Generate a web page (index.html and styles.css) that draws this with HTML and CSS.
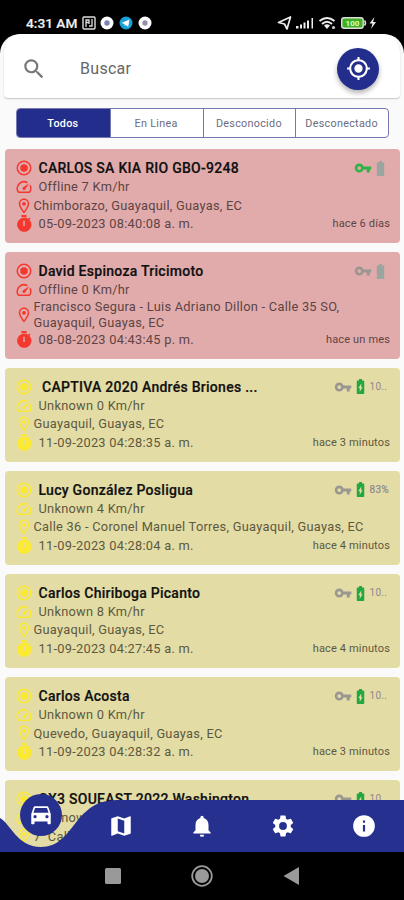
FILE: index.html
```
<!DOCTYPE html>
<html lang="es">
<head>
<meta charset="utf-8">
<title>Vehículos</title>
<link rel="stylesheet" href="styles.css">
</head>
<body>
<svg class="defs" aria-hidden="true">
  <symbol id="radio" viewBox="0 0 24 24"><path d="M12 7a5 5 0 1 0 0 10 5 5 0 0 0 0-10zm0-5a10 10 0 1 0 0 20 10 10 0 0 0 0-20zm0 18a8 8 0 1 1 0-16 8 8 0 0 1 0 16z"/></symbol>
  <symbol id="speed" viewBox="0 0 24 24"><path d="m20.38 8.57-1.23 1.85a8 8 0 0 1-.22 7.58H5.07A8 8 0 0 1 15.58 6.85l1.85-1.23A10 10 0 0 0 3.35 19a2 2 0 0 0 1.72 1h13.85a2 2 0 0 0 1.74-1 10 10 0 0 0-.27-10.44zm-9.79 6.84a2 2 0 0 0 2.83 0l5.66-8.49-8.49 5.66a2 2 0 0 0 0 2.83z"/></symbol>
  <symbol id="pin" viewBox="0 0 24 24"><path d="M12 2C8.130 2 5 5.130 5 9c0 5.250 7 13 7 13s7-7.750 7-13c0-3.870-3.130-7-7-7zM7 9a5 5 0 0 1 10 0c0 2.880-2.880 7.190-5 9.880C9.920 16.210 7 11.850 7 9z"/><circle cx="12" cy="9" r="2.500"/></symbol>
  <symbol id="timer" viewBox="0 0 24 24"><path fill-rule="evenodd" d="M8.500 0h7v2.500h-7zM19.200 6.300l1.500-1.500-1.600-1.500-1.600 1.600A9.500 9.500 0 1 0 19.200 6.300zM11 7.500h2v7h-2z"/></symbol>
  <symbol id="key" viewBox="0 0 24 24"><path d="M12.650 10C11.830 7.670 9.610 6 7 6c-3.310 0-6 2.690-6 6s2.690 6 6 6c2.610 0 4.830-1.670 5.650-4H17v4h4v-4h2v-4H12.650zM7 14.500a2.500 2.500 0 1 1 0-5 2.500 2.500 0 0 1 0 5z"/></symbol>
  <symbol id="battery" viewBox="6 1 12 22"><path d="M15.670 4H14V2h-4v2H8.330C7.600 4 7 4.600 7 5.330v15.330C7 21.400 7.600 22 8.330 22h7.330c.74 0 1.340-.6 1.340-1.330V5.330C17 4.600 16.400 4 15.670 4z"/></symbol>
  <symbol id="charging" viewBox="6 1 12 22"><path fill-rule="evenodd" d="M15.670 4H14V2h-4v2H8.330C7.600 4 7 4.600 7 5.330v15.330C7 21.400 7.600 22 8.330 22h7.330c.74 0 1.340-.6 1.340-1.330V5.330C17 4.600 16.400 4 15.670 4zM11 19v-5H9.300L13 8v5h1.700z"/></symbol>
</svg>
<div class="phone">
  <div class="status">
    <span class="clock">4:31 AM</span>
    <svg class="s-nfc" viewBox="0 0 14 14"><rect x="1" y="1" width="12" height="12" rx="1" fill="none" stroke="#ddd" stroke-width="1.400"/><path d="M4 11V4h3v4M10 3v7H7M3.500 6.500h4" fill="none" stroke="#ddd" stroke-width="1.300"/></svg>
    <svg class="s-dot" viewBox="0 0 14 14"><circle cx="7" cy="7" r="6.500" fill="#fff"/><circle cx="7" cy="7" r="2.700" fill="#7883b4"/></svg>
    <svg class="s-dot" viewBox="0 0 14 14"><circle cx="7" cy="7" r="6.500" fill="#18a0d8"/><path d="m2.500 7 8-3.500-1.300 7.500-2.400-2-1.200 1v-2z" fill="#fff"/></svg>
    <svg class="s-dot" viewBox="0 0 14 14"><circle cx="7" cy="7" r="6.500" fill="#fff"/><circle cx="7" cy="7" r="2.700" fill="#8e91a8"/></svg>
    <svg class="s-right" viewBox="0 0 101 16"><g fill="#eee"><path d="m1.500 7.500 12-5.500-3.500 12-2.500-5z" fill="none" stroke="#eee" stroke-width="1.700" stroke-linejoin="round"/><path d="M19 11h2.500v2.500H19zM23 9.500h2v4h-2zM26.500 7.500h2v6h-2zM30 5.500h2v8h-2zM34.500 3H36v10.500h-1.500z"/></g><g fill="none" stroke="#eee" stroke-width="2"><path d="M42.500 6q7.500-6 15 0M45 9q5-4.500 10 0"/></g><path d="m50 14-3-3.500q3-2.500 6 0z" fill="#eee"/><circle cx="56.500" cy="12.500" r="1.600" fill="#ccc"/><rect x="64.700" y="2.700" width="21.500" height="10.600" rx="2.500" fill="#3fae21" stroke="#ddd" stroke-width="1.400"/><path d="M87.500 5.500q2 2.500 0 5" stroke="#ddd" stroke-width="1.500" fill="none"/><text x="75.500" y="11" text-anchor="middle" class="pct">100</text><path d="m97.500 2-5 6.500h3l-1.500 5.500 5-7h-3z" fill="#eee"/></svg>
  </div>
  <div class="screen">
    <header class="search">
      <svg class="lens" viewBox="0 0 24 24"><path d="M15.500 14h-.79l-.28-.27A6.470 6.470 0 0 0 16 9.500 6.500 6.500 0 1 0 9.500 16c1.610 0 3.090-.59 4.230-1.570l.27.28v.79l5 4.990L20.490 19zm-6 0a4.500 4.500 0 1 1 0-9 4.500 4.500 0 0 1 0 9z"/></svg>
      <span class="hint">Buscar</span>
      <span class="locate"><svg viewBox="0 0 24 24"><path d="M12 8a4 4 0 1 0 0 8 4 4 0 0 0 0-8zm8.940 3A8.990 8.990 0 0 0 13 3.060V1h-2v2.060A8.990 8.990 0 0 0 3.060 11H1v2h2.060A8.990 8.990 0 0 0 11 20.940V23h2v-2.060A8.990 8.990 0 0 0 20.940 13H23v-2h-2.060zM12 19a7 7 0 1 1 0-14 7 7 0 0 1 0 14z"/></svg></span>
    </header>
    <nav class="tabs"><span class="on">Todos</span><span>En Linea</span><span>Desconocido</span><span>Desconectado</span></nav>
    <main class="list">
      <article class="card off">
        <div class="row"><svg><use href="#radio"/></svg><b>CARLOS SA KIA RIO GBO-9248</b><span class="state"><svg class="key live"><use href="#key"/></svg><svg class="bat"><use href="#battery"/></svg></span></div>
        <div class="row"><svg><use href="#speed"/></svg><span>Offline 7 Km/hr</span></div>
        <div class="row place"><svg><use href="#pin"/></svg><span>Chimborazo, Guayaquil, Guayas, EC</span></div>
        <div class="row"><svg><use href="#timer"/></svg><span class="date">05-09-2023 08:40:08 a. m.</span><small>hace 6 días</small></div>
      </article>
      <article class="card off">
        <div class="row"><svg><use href="#radio"/></svg><b>David Espinoza Tricimoto</b><span class="state"><svg class="key"><use href="#key"/></svg><svg class="bat"><use href="#battery"/></svg></span></div>
        <div class="row"><svg><use href="#speed"/></svg><span>Offline 0 Km/hr</span></div>
        <div class="row place"><svg><use href="#pin"/></svg><span>Francisco Segura - Luis Adriano Dillon - Calle 35 SO,<br>Guayaquil, Guayas, EC</span></div>
        <div class="row"><svg><use href="#timer"/></svg><span class="date">08-08-2023 04:43:45 p. m.</span><small>hace un mes</small></div>
      </article>
      <article class="card unk">
        <div class="row"><svg><use href="#radio"/></svg><b class="inset">CAPTIVA 2020 Andrés Briones ...</b><span class="state"><svg class="key"><use href="#key"/></svg><svg class="bat full"><use href="#charging"/></svg><i>10..</i></span></div>
        <div class="row"><svg><use href="#speed"/></svg><span>Unknown 0 Km/hr</span></div>
        <div class="row place"><svg><use href="#pin"/></svg><span>Guayaquil, Guayas, EC</span></div>
        <div class="row"><svg><use href="#timer"/></svg><span class="date">11-09-2023 04:28:35 a. m.</span><small>hace 3 minutos</small></div>
      </article>
      <article class="card unk">
        <div class="row"><svg><use href="#radio"/></svg><b>Lucy González Posligua</b><span class="state"><svg class="key"><use href="#key"/></svg><svg class="bat full"><use href="#charging"/></svg><i class="strong">83%</i></span></div>
        <div class="row"><svg><use href="#speed"/></svg><span>Unknown 4 Km/hr</span></div>
        <div class="row place"><svg><use href="#pin"/></svg><span>Calle 36 - Coronel Manuel Torres, Guayaquil, Guayas, EC</span></div>
        <div class="row"><svg><use href="#timer"/></svg><span class="date">11-09-2023 04:28:04 a. m.</span><small>hace 4 minutos</small></div>
      </article>
      <article class="card unk">
        <div class="row"><svg><use href="#radio"/></svg><b>Carlos Chiriboga Picanto</b><span class="state"><svg class="key"><use href="#key"/></svg><svg class="bat full"><use href="#charging"/></svg><i>10..</i></span></div>
        <div class="row"><svg><use href="#speed"/></svg><span>Unknown 8 Km/hr</span></div>
        <div class="row place"><svg><use href="#pin"/></svg><span>Guayaquil, Guayas, EC</span></div>
        <div class="row"><svg><use href="#timer"/></svg><span class="date">11-09-2023 04:27:45 a. m.</span><small>hace 4 minutos</small></div>
      </article>
      <article class="card unk">
        <div class="row"><svg><use href="#radio"/></svg><b>Carlos Acosta</b><span class="state"><svg class="key"><use href="#key"/></svg><svg class="bat full"><use href="#charging"/></svg><i>10..</i></span></div>
        <div class="row"><svg><use href="#speed"/></svg><span>Unknown 0 Km/hr</span></div>
        <div class="row place"><svg><use href="#pin"/></svg><span>Quevedo, Guayaquil, Guayas, EC</span></div>
        <div class="row"><svg><use href="#timer"/></svg><span class="date">11-09-2023 04:28:32 a. m.</span><small>hace 3 minutos</small></div>
      </article>
      <article class="card unk">
        <div class="row"><svg><use href="#radio"/></svg><b>CX3 SOUEAST 2022 Washington</b><span class="state"><svg class="key"><use href="#key"/></svg><svg class="bat full"><use href="#charging"/></svg><i>10..</i></span></div>
        <div class="row"><svg><use href="#speed"/></svg><span>Unknown</span></div>
        <div class="row place"><svg><use href="#pin"/></svg><span>7&nbsp; Calle</span></div>
      </article>
    </main>
  </div>
  <nav class="dock">
    <svg class="wave" viewBox="0 0 404 52" preserveAspectRatio="none"><path d="M0 18C10 23 17 47 41 47C75 47 73 0 117 0H404V52H0z"/></svg>
    <span class="item active"><svg viewBox="0 0 24 24"><path fill-rule="evenodd" d="M18.920 5.010C18.720 4.420 18.160 4 17.500 4h-11c-.66 0-1.210.42-1.420 1.010L3 11v8.500c0 .55.45 1 1 1h1c.55 0 1-.45 1-1V18h12v1.500c0 .55.45 1 1 1h1c.55 0 1-.45 1-1V11zM6.500 15a1.500 1.500 0 1 1 0-3 1.500 1.500 0 0 1 0 3zm11 0a1.500 1.500 0 1 1 0-3 1.500 1.500 0 0 1 0 3zM5 10l1.500-4.500h11L19 10z"/></svg></span>
    <span class="item"><svg viewBox="0 0 24 24"><path fill-rule="evenodd" d="m20.500 3-.16.03L15 5.100 9 3 3.360 4.900c-.21.07-.36.25-.36.48V20.500c0 .28.22.5.5.5l.16-.03L9 18.900l6 2.100 5.640-1.900c.21-.07.36-.25.36-.48V3.500c0-.28-.22-.5-.5-.5zM15 19l-6-2.110V5l6 2.110z"/></svg></span>
    <span class="item"><svg viewBox="0 0 24 24"><path d="M12 22a2 2 0 0 0 2-2h-4a2 2 0 0 0 2 2zm6-6v-5c0-3.070-1.640-5.640-4.500-6.320V4a1.500 1.500 0 0 0-3 0v.68C7.630 5.360 6 7.920 6 11v5l-2 2v1h16v-1z"/></svg></span>
    <span class="item"><svg viewBox="0 0 24 24"><path d="M19.140 12.940c.04-.3.06-.61.06-.94 0-.32-.02-.64-.07-.94l2.030-1.580a.49.49 0 0 0 .12-.61l-1.920-3.320a.488.488 0 0 0-.59-.22l-2.390.96c-.5-.38-1.030-.7-1.620-.94l-.36-2.540a.484.484 0 0 0-.48-.41h-3.840c-.24 0-.43.17-.47.41l-.36 2.540c-.59.24-1.130.57-1.620.94l-2.390-.96c-.22-.08-.47 0-.59.22L2.740 8.870c-.12.21-.08.47.12.61l2.030 1.580c-.05.3-.09.63-.09.94s.02.64.07.94l-2.030 1.580a.49.49 0 0 0-.12.61l1.920 3.320c.12.22.37.29.59.22l2.390-.96c.5.38 1.030.7 1.620.94l.36 2.540c.05.24.24.41.48.41h3.840c.24 0 .44-.17.47-.41l.36-2.540c.59-.24 1.130-.56 1.620-.94l2.390.96c.22.08.47 0 .59-.22l1.920-3.320c.12-.22.07-.47-.12-.61zM12 15.600a3.600 3.600 0 1 1 0-7.200 3.600 3.600 0 0 1 0 7.200z"/></svg></span>
    <span class="item"><svg viewBox="0 0 24 24"><circle cx="12" cy="12" r="10"/><path class="info" d="M11 7h2v2h-2zM11 11h2v6h-2z"/></svg></span>
  </nav>
  <div class="keys">
    <svg viewBox="0 0 18 18"><rect x="1" y="1" width="16" height="16" rx="1.500"/></svg>
    <svg class="home" viewBox="0 0 22 22"><circle cx="11" cy="11" r="9.800" class="ring"/><circle cx="11" cy="11" r="7"/></svg>
    <svg viewBox="0 0 18 18"><path d="M1.500 9 17 0v18z"/></svg>
  </div>
</div>
</body>
</html>
```
FILE: styles.css
```
* { box-sizing: border-box; }
body { margin: 0; background: #000; font-family: Roboto, "Liberation Sans", sans-serif; }
.defs { position: absolute; width: 0; height: 0; }
.phone { position: relative; width: 404px; height: 900px; overflow: hidden; display: flex; flex-direction: column; background: #000; }
.status { height: 34px; flex: none; display: flex; align-items: center; padding: 12px 26px 0; color: #eee; }
.clock { font-size: 13.7px; font-weight: 500; width: 53px; margin-right: 2.5px; white-space: nowrap; -webkit-text-stroke: .2px #eee; }
.s-nfc { width: 14px; height: 14px; margin-right: 4.5px; }
.s-dot { width: 14px; height: 14px; margin-right: 4.8px; }
.s-right { width: 101px; height: 16px; margin-left: auto; }
.pct { font-size: 8px; font-weight: 700; fill: #d8ffcf; }
.screen { height: 818px; flex: none; overflow: hidden; background: #fafafa; border-radius: 20px 20px 0 0; }
.search { height: 64px; margin: 0 4px; background: #fff; border-radius: 18px 18px 4px 4px; box-shadow: 0 1px 1.5px rgba(0,0,0,.22); display: flex; align-items: center; padding: 5px 21px 0 17px; }
.lens { width: 26px; height: 26px; fill: #777; }
.hint { margin-left: 33px; font-size: 16px; letter-spacing: .3px; color: #666; }
.locate { margin-left: auto; width: 42px; height: 42px; border-radius: 50%; background: #232d8c; display: flex; align-items: center; justify-content: center; box-shadow: 0 3px 5px rgba(0,0,0,.3); }
.locate svg { width: 25px; height: 25px; fill: #fff; }
.tabs { margin: 10px 15px 0 16px; height: 30px; display: grid; grid-template-columns: repeat(4, 1fr); border: 1px solid #7778b0; border-radius: 4px; overflow: hidden; background: #fff; }
.tabs span { display: flex; align-items: center; justify-content: center; font-size: 10.8px; letter-spacing: .28px; color: #6c6c80; border-left: 1px solid #7778b0; padding-right: 1px; }
.tabs .on { background: #232d8c; color: #fff; font-weight: 500; border-left: 0; }
.list { display: flex; flex-direction: column; gap: 8.6px; padding: 11px 4px 0 5px; }
.card { flex: none; padding: 10.1px 10px 10px; border-radius: 4px; color: #5c4444; }
.off { background: #e2abab; --mark: #f4382f; }
.unk { background: #e4dca5; --mark: #fcea32; color: #5c593f; }
.row { height: 18.6px; display: flex; align-items: center; font-size: 12.8px; letter-spacing: .27px; line-height: 15.5px; white-space: nowrap; }
.row > svg { width: 18px; height: 18px; flex: none; margin-right: 5.5px; fill: var(--mark); }
.row b { font-size: 14px; font-weight: 500; color: #111; letter-spacing: .27px; -webkit-text-stroke: .2px #111; padding-top: 1px; }
.row .inset { margin-left: 3.5px; }
.place { height: auto; min-height: 18.6px; }
.place > svg { margin-right: .5px; }
.row small { margin-left: auto; font-size: 11px; letter-spacing: .15px; }
.state { margin-left: auto; display: flex; align-items: center; }
.key { width: 18px; height: 18px; fill: #9a9692; }
.live { fill: #2fb344; }
.bat { width: 9px; height: 17px; margin: 0 5px 0 4px; fill: #9aa5a0; }
.full { fill: #22a843; }
.state i { width: 20.5px; font-style: normal; font-size: 10px; color: #8d8892; }
.state .strong { -webkit-text-stroke: .2px #8d8892; }
.dock { position: absolute; left: 0; top: 800px; width: 404px; height: 52px; display: grid; grid-template-columns: repeat(5, 1fr); align-items: center; }
.wave { position: absolute; left: 0; top: 0; width: 404px; height: 52px; fill: #26318f; }
.item { position: relative; display: flex; justify-content: center; }
.item svg { width: 26px; height: 26px; fill: #fff; }
.item .info { fill: #26318f; }
.active { width: 42px; height: 42px; margin-left: 20px; border-radius: 50%; background: #26318f; align-items: center; top: -11px; }
.keys { height: 48px; flex: none; display: flex; align-items: center; justify-content: center; gap: 69px; }
.keys svg { width: 18px; height: 18px; fill: #999; }
.keys .home { width: 22px; height: 22px; }
.ring { fill: none; stroke: #999; stroke-width: 1.8px; }
```
